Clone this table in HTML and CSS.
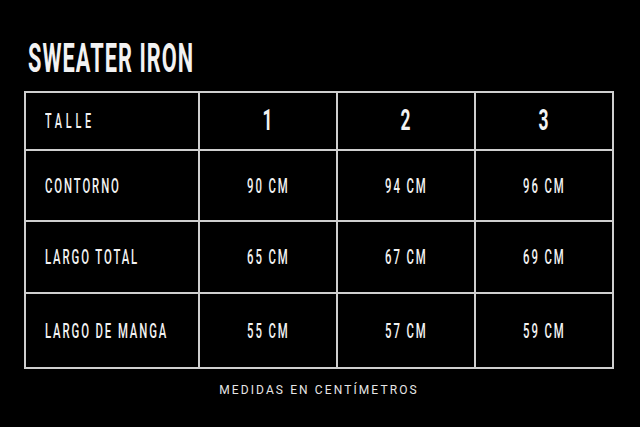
FILE: index.html
```html
<!DOCTYPE html>
<html lang="es">
<head>
<meta charset="utf-8">
<title>Sweater Iron</title>
<link rel="stylesheet" href="styles.css">
</head>
<body>
<main class="sheet">
  <h1 class="title"><span class="sq sq-title">SWEATER IRON</span></h1>
  <table class="sizes">
    <colgroup>
      <col class="c-label"><col class="c-size"><col class="c-size"><col class="c-size">
    </colgroup>
    <thead>
      <tr class="r-head">
        <th class="label"><span class="sq sq-left sq-talle">TALLE</span></th>
        <th><span class="sq sq-num">1</span></th>
        <th><span class="sq sq-num">2</span></th>
        <th><span class="sq sq-num">3</span></th>
      </tr>
    </thead>
    <tbody>
      <tr class="r1">
        <td class="label"><span class="sq sq-left">CONTORNO</span></td>
        <td><span class="sq">90 CM</span></td>
        <td><span class="sq">94 CM</span></td>
        <td><span class="sq">96 CM</span></td>
      </tr>
      <tr class="r2">
        <td class="label"><span class="sq sq-left">LARGO TOTAL</span></td>
        <td><span class="sq">65 CM</span></td>
        <td><span class="sq">67 CM</span></td>
        <td><span class="sq">69 CM</span></td>
      </tr>
      <tr class="r3">
        <td class="label"><span class="sq sq-left">LARGO DE MANGA</span></td>
        <td><span class="sq">55 CM</span></td>
        <td><span class="sq">57 CM</span></td>
        <td><span class="sq">59 CM</span></td>
      </tr>
    </tbody>
  </table>
  <p class="note">MEDIDAS EN CENTÍMETROS</p>
</main>
</body>
</html>
```

FILE: styles.css
```css
html, body {
  margin: 0;
  padding: 0;
  background: #000;
}

body {
  width: 640px;
  height: 427px;
  overflow: hidden;
  font-family: Roboto, "Liberation Sans", sans-serif;
  color: #f2f2f2;
}

.sheet {
  padding: 34px 0 0 24px;
  width: 590px;
}

.title {
  margin: 0 0 0 4px;
  height: 57px;
  font-size: 41px;
  line-height: 48px;
  font-weight: 700;
}

.sq {
  display: inline-block;
  white-space: nowrap;
  transform: scaleX(0.54);
  transform-origin: center center;
  font-size: 21px;
  font-weight: 500;
  letter-spacing: 3.5px;
  line-height: 24px;
}

.sq-left {
  transform-origin: left center;
}

.sq-title {
  font-size: 41px;
  font-weight: 700;
  line-height: 46px;
  letter-spacing: 2px;
  transform: scaleX(0.53);
  transform-origin: left center;
}

.sq-talle {
  letter-spacing: 7px;
  font-size: 20px;
}

.sq-num {
  font-size: 30px;
  font-weight: 700;
  letter-spacing: 0;
  transform: scaleX(0.58);
}

.sizes {
  border-collapse: collapse;
  table-layout: fixed;
  width: 590px;
}

.c-label { width: 174px; }
.c-size { width: 138px; }

.sizes th,
.sizes td {
  border: 2px solid #cfcfcf;
  padding: 0;
  text-align: center;
  vertical-align: middle;
  font-weight: 500;
}

.sizes .label {
  text-align: left;
  padding-left: 19px;
}

.r-head { height: 58px; }
.r1 { height: 71px; }
.r2 { height: 72px; }
.r3 { height: 75px; }

.note {
  margin: 14px 0 0;
  text-align: center;
  font-size: 12px;
  font-weight: 400;
  letter-spacing: 2.1px;
  color: #e6e6e6;
}
```
